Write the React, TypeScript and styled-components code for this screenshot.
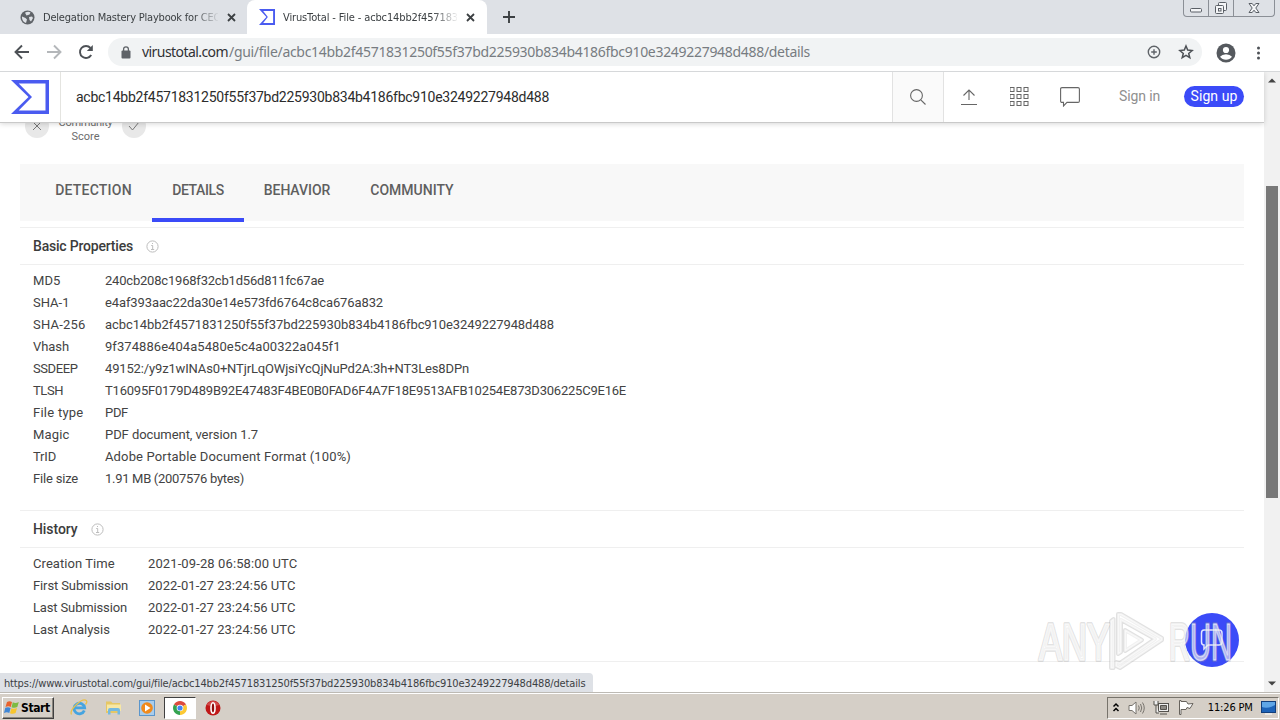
import React from "react";
import styled, { createGlobalStyle } from "styled-components";

const HASH = "acbc14bb2f4571831250f55f37bd225930b834b4186fbc910e3249227948d488";
const BLUE = "#3b4bf8";
const UI = '"DejaVu Sans Condensed", "Noto Sans", sans-serif';
const BODY = 'Roboto, "Liberation Sans", sans-serif';

const GlobalStyle = createGlobalStyle`
  * { box-sizing: border-box; }
  body { margin: 0; overflow: hidden; background: #fff; }
  svg { display: block; flex: none; }
`;

const Screen = styled.div`
  width: 1280px;
  height: 720px;
  display: flex;
  flex-direction: column;
  position: relative;
  overflow: hidden;
  font-family: ${BODY};
  color: #434343;
`;

/* letter-spaced text run that never wraps */
const Text = styled.span<{ $ls?: number }>`
  white-space: nowrap;
  letter-spacing: ${(p) => p.$ls ?? 0}px;
`;

/* ---------- browser chrome ---------- */

const TabStrip = styled.div`
  flex: none;
  height: 34px;
  display: flex;
  background: #dee1e6;
  font-family: ${UI};
  font-size: 11px;
  color: #3c4043;
`;

const BrowserTab = styled.div<{ $active?: boolean }>`
  width: ${(p) => (p.$active ? 240 : 247)}px;
  height: 34px;
  padding: 0 ${(p) => (p.$active ? 12 : 11)}px 0 ${(p) => (p.$active ? 12 : 20)}px;
  display: flex;
  align-items: center;
  border-radius: ${(p) => (p.$active ? "8px 8px 0 0" : "0")};
  background: ${(p) => (p.$active ? "#fff" : "transparent")};
`;

const TabTitle = styled.div`
  flex: 1;
  margin: 1px 9px 0 8px;
  overflow: hidden;
  white-space: nowrap;
  mask-image: linear-gradient(to right, #000 86%, transparent 101%);
`;

const NewTab = styled.div`
  width: 44px;
  height: 34px;
  display: grid;
  place-items: center;
`;

const WindowButtons = styled.div`
  margin: 0 5px 0 auto;
  height: 17px;
  display: flex;
  border: 1px solid #8b8f96;
  border-top: 0;
  border-radius: 0 0 4px 4px;
`;

const WindowButton = styled.div<{ $w: number }>`
  width: ${(p) => p.$w}px;
  display: flex;
  justify-content: center;
  & + & { border-left: 1px solid #8b8f96; }
`;

const Toolbar = styled.div`
  flex: none;
  height: 38px;
  padding: 0 14px;
  display: flex;
  align-items: center;
  border-bottom: 1px solid #d6d8da;
  background: #fff;
`;

const NavIcon = styled.div`
  width: 32px;
  padding-bottom: 1px;
`;

const AddressBar = styled.div`
  width: 1094px;
  height: 28px;
  margin: 0 14px 1px -2px;
  padding: 0 8px 0 13px;
  display: flex;
  align-items: center;
  border-radius: 14px;
  background: #f1f3f4;
`;

const Address = styled.div`
  flex: 1;
  margin-left: 11px;
  display: flex;
  font-family: "Noto Sans", sans-serif;
  font-size: 14px;
  line-height: 26px;
  color: #777c81;
`;

const Host = styled(Text)`
  width: 87px;
  color: #303134;
`;

const AddressActions = styled.div`
  display: flex;
  gap: 16px;
`;

const MenuDots = styled.svg`
  margin-left: 20px;
`;

/* ---------- page ---------- */

const Viewport = styled.div`
  flex: none;
  height: 620px;
  display: flex;
  overflow: hidden;
`;

const Page = styled.div`
  width: 1264px;
  display: flex;
  flex-direction: column;
  background: #fff;
`;

const SiteHeader = styled.header`
  position: relative;
  z-index: 1;
  flex: none;
  height: 51px;
  display: flex;
  background: #fff;
  border-bottom: 1px solid #c9c9c9;
  box-shadow: 0 1px 5px rgba(0, 0, 0, 0.16);
`;

const LogoCell = styled.div`
  width: 61px;
  padding: 8px 0 0 11px;
  border-right: 1px solid #e4e4e0;
`;

const SearchText = styled.div`
  flex: 1;
  padding-left: 15px;
  font-size: 14px;
  line-height: 51px;
  color: #2c2c2c;
`;

const SearchButton = styled.div`
  width: 52px;
  display: grid;
  place-items: center;
  border: solid #e2e2e2;
  border-width: 0 1px;
  background: #fafafa;
`;

const HeaderIcons = styled.div`
  width: 320px;
  padding-left: 16px;
  display: flex;
  align-items: center;
  font-size: 14px;
`;

const HeaderIcon = styled.div`
  width: 50px;
`;

const SignIn = styled(Text)`
  width: 65px;
  margin: 0 0 3px 9px;
  color: #8f8f8f;
`;

const SignUp = styled(Text)`
  width: 60px;
  height: 21px;
  margin-bottom: 2px;
  border-radius: 11px;
  background: ${BLUE};
  color: #fff;
  line-height: 21px;
  text-align: center;
`;

const Content = styled.main`
  padding: 0 20px;
  height: 569px;
  overflow: hidden;
`;

const ScoreRow = styled.div`
  height: 41px;
  padding: 0 5px;
  display: flex;
  align-items: flex-start;
  font-size: 11px;
  line-height: 14px;
  color: #6c6c6c;
`;

const Vote = styled.div`
  width: 24px;
  height: 24px;
  margin-top: -9px;
  border-radius: 50%;
  background: #e8e8e8;
  display: grid;
  place-items: center;
`;

const ScoreLabel = styled.div`
  width: 73px;
  margin-top: -7px;
  text-align: center;
`;

const PageTabs = styled.nav`
  height: 57px;
  margin-bottom: 6px;
  padding-left: 15px;
  display: flex;
  background: #f8f8f8;
  font-size: 14px;
  font-weight: 500;
  color: #5f5f5f;
`;

const PageTab = styled.div<{ $w: number; $active?: boolean }>`
  width: ${(p) => p.$w}px;
  height: 58px;
  text-align: center;
  line-height: 52px;
  border-bottom: 4px solid ${(p) => (p.$active ? BLUE : "transparent")};
`;

const Section = styled.section<{ $h: number }>`
  height: ${(p) => p.$h}px;
  border-top: 1px solid #efefef;
`;

const SectionTitle = styled.div`
  height: 37px;
  padding-left: 13px;
  display: flex;
  align-items: center;
  gap: 13px;
  border-bottom: 1px solid #efefef;
  font-size: 14px;
  font-weight: 500;
  color: #3c3c3c;
`;

const Rows = styled.div<{ $label: number }>`
  padding: 4px 0 0 13px;
  display: grid;
  grid-template-columns: ${(p) => p.$label}px 1fr;
  grid-auto-rows: 22px;
  align-items: center;
  font-size: 13px;
`;

const ScrollBar = styled.div`
  width: 16px;
  padding: 6px 0;
  display: flex;
  flex-direction: column;
  align-items: center;
  background: #f1f1f1;
`;

const Thumb = styled.div`
  width: 12px;
  height: 312px;
  margin: 103px 0 auto;
  background: #787878;
`;

const StatusBubble = styled.div`
  position: absolute;
  left: 0;
  top: 673px;
  width: 593px;
  height: 19px;
  padding-left: 4px;
  border-radius: 0 4px 0 0;
  background: #dee1e6;
  font-family: ${UI};
  font-size: 11px;
  line-height: 21px;
  color: #3c4043;
`;

const ChatButton = styled.div`
  position: absolute;
  left: 1185px;
  top: 613px;
  width: 54px;
  height: 54px;
  border-radius: 50%;
  background: ${BLUE};
  display: grid;
  place-items: center;
`;

const Watermark = styled.svg`
  position: absolute;
  left: 1030px;
  top: 602px;
`;

/* ---------- taskbar ---------- */

const Taskbar = styled.div`
  flex: none;
  height: 28px;
  padding: 2px 1px 0 2px;
  display: flex;
  align-items: center;
  background: #d5cfc7;
  border-top: 1px solid #bdbab4;
  box-shadow: inset 0 1px #fff;
  font-family: ${UI};
  font-size: 11px;
  color: #000;
`;

const StartButton = styled.div`
  width: 52px;
  height: 22px;
  padding-left: 1px;
  display: flex;
  align-items: center;
  gap: 1px;
  border: 1px solid;
  border-color: #fff #404040 #404040 #fff;
  box-shadow: inset -1px -1px #8a867e;
  font-size: 12px;
  font-weight: bold;
`;

const QuickLaunch = styled.div`
  margin-left: 8px;
  display: flex;
  align-items: center;
`;

const TaskItem = styled.div<{ $active?: boolean }>`
  width: ${(p) => (p.$active ? 32 : 34)}px;
  height: 22px;
  display: grid;
  place-items: center;
  border: 1px solid;
  border-color: ${(p) => (p.$active ? "#404040 #fff #fff #404040" : "transparent")};
  background: ${(p) => (p.$active ? "#fff" : "transparent")};
`;

const Tray = styled.div`
  width: 172px;
  height: 22px;
  margin-left: auto;
  padding: 0 2px 0 4px;
  display: flex;
  align-items: center;
  justify-content: space-between;
  border: 1px solid;
  border-color: #77736b #fff #fff #77736b;
`;

const Clock = styled(Text)`
  margin-left: 6px;
`;

/* ---------- drawings ---------- */

const Sigma = ({ w, h, notch = 3.5 }: { w: number; h: number; notch?: number }) => (
  <svg width={w} height={h} viewBox="0 0 38 34" preserveAspectRatio="none">
    <path
      fill="#4a5bf0"
      fillRule="evenodd"
      d={`M0 0H38V34H0L17.5 17ZM${notch * 2.2} ${notch}L21 17L${notch * 2.2} ${34 - notch}H${38 - notch}V${notch}Z`}
    />
  </svg>
);

const Close = () => (
  <svg width="9" height="9" viewBox="0 0 9 9" stroke="#3c4043" strokeWidth="1.8">
    <path d="M1 1l7 7M8 1l-7 7" />
  </svg>
);

const Globe = () => (
  <svg width="15" height="15" viewBox="0 0 15 15">
    <circle cx="7.5" cy="7.5" r="7" fill="#5f6368" />
    <path fill="#dee1e6" d="M2 6.500L5.500 8 7 9.500 6 13Q2.500 12 2 8ZM5 2.800Q8 1 10.500 2.400L9.500 4.500 6.500 5.500ZM9 7l3-.5 1 1.500-2 3.500-1.500-1.500z" />
  </svg>
);

const Arrow = ({ color, flip }: { color: string; flip?: boolean }) => (
  <svg width="16" height="16" viewBox="0 0 16 16" fill="none" stroke={color} strokeWidth="1.9">
    <path d={flip ? "M1 8H14M8 1.500L14.500 8 8 14.500" : "M15 8H2M8 1.500L1.500 8 8 14.500"} />
  </svg>
);

const Reload = () => (
  <svg width="16" height="16" viewBox="0 0 16 16">
    <path d="M13.200 11A6 6 0 1 1 12.500 4" fill="none" stroke="#4d5156" strokeWidth="1.9" />
    <path d="M14.800 1V7H8.800Z" fill="#4d5156" />
  </svg>
);

const Lock = () => (
  <svg width="10" height="13" viewBox="0 0 10 13">
    <rect x="0.5" y="4.5" width="9" height="8" rx="1" fill="#5f6368" />
    <path d="M2.600 5V3.200a2.400 2.400 0 0 1 4.800 0V5" fill="none" stroke="#5f6368" strokeWidth="1.3" />
  </svg>
);

const ZoomPlus = () => (
  <svg width="16" height="16" viewBox="0 0 16 16" fill="none" stroke="#5f6368" strokeWidth="1.4">
    <circle cx="8" cy="8" r="5.7" />
    <path d="M8 5.200v5.600M5.200 8h5.600" />
  </svg>
);

const Star = () => (
  <svg width="16" height="16" viewBox="0 0 16 16" fill="none" stroke="#4d5156" strokeWidth="1.5">
    <path d="M8 2l1.700 4.100 4.400.4-3.400 2.900 1.100 4.300L8 11.400l-3.800 2.300 1.100-4.300L1.900 6.500l4.400-.4z" />
  </svg>
);

const Avatar = () => (
  <svg width="20" height="20" viewBox="0 0 20 20">
    <circle cx="10" cy="10" r="9.5" fill="#55595e" />
    <circle cx="10" cy="7" r="3.1" fill="#fff" />
    <path d="M4 13.800Q6 11.300 10 11.300T16 13.800Q13.800 16.800 10 16.800T4 13.800Z" fill="#fff" />
  </svg>
);

const Info = () => (
  <svg width="13" height="13" viewBox="0 0 13 13" fill="none" stroke="#bdbdbd">
    <circle cx="6.5" cy="6.5" r="5.6" />
    <path d="M5.200 5.500H6.700V9.500M5 9.500H8.200M6 3.500H7" />
  </svg>
);

const Caret = ({ down }: { down?: boolean }) => (
  <svg width="8" height="5" viewBox="0 0 8 5">
    <path d={down ? "M0 .5H8L4 4.500Z" : "M0 4.500H8L4 .5Z"} fill="#444" />
  </svg>
);

type RowData = { label: string; value: string; a: number; b: number };

const Row = ({ label, value, a, b }: RowData) => (
  <>
    <Text $ls={a}>{label}</Text>
    <Text $ls={b}>{value}</Text>
  </>
);

const basic: RowData[] = [
  { label: "MD5", value: "240cb208c1968f32cb1d56d811fc67ae", a: 0.1, b: -0.202 },
  { label: "SHA-1", value: "e4af393aac22da30e14e573fd6764c8ca676a832", a: 0, b: -0.11 },
  { label: "SHA-256", value: HASH, a: 0.2, b: -0.083 },
  { label: "Vhash", value: "9f374886e404a5480e5c4a00322a045f1", a: -0.076, b: 0.061 },
  { label: "SSDEEP", value: "49152:/y9z1wINAs0+NTjrLqOWjsiYcQjNuPd2A:3h+NT3Les8DPn", a: -0.408, b: -0.15 },
  { label: "TLSH", value: "T16095F0179D489B92E47483F4BE0B0FAD6F4A7F18E9513AFB10254E873D306225C9E16E", a: -0.438, b: -0.218 },
  { label: "File type", value: "PDF", a: 0.253, b: -0.306 },
  { label: "Magic", value: "PDF document, version 1.7", a: 0.163, b: -0.064 },
  { label: "TrID", value: "Adobe Portable Document Format (100%)", a: -0.188, b: 0.138 },
  { label: "File size", value: "1.91 MB (2007576 bytes)", a: -0.193, b: -0.297 },
];

const history: RowData[] = [
  { label: "Creation Time", value: "2021-09-28 06:58:00 UTC", a: 0.065, b: 0.11 },
  { label: "First Submission", value: "2022-01-27 23:24:56 UTC", a: -0.116, b: 0.03 },
  { label: "Last Submission", value: "2022-01-27 23:24:56 UTC", a: -0.145, b: 0.03 },
  { label: "Last Analysis", value: "2022-01-27 23:24:56 UTC", a: 0, b: 0.03 },
];

export default function App() {
  return (
    <Screen>
      <GlobalStyle />
      <TabStrip>
        <BrowserTab>
          <Globe />
          <TabTitle><Text $ls={-0.211}>Delegation Mastery Playbook for CEO</Text></TabTitle>
          <Close />
        </BrowserTab>
        <BrowserTab $active>
          <Sigma w={16} h={16} notch={4.5} />
          <TabTitle><Text $ls={-0.134}>VirusTotal - File - {HASH.slice(0, 16)}</Text></TabTitle>
          <Close />
        </BrowserTab>
        <NewTab>
          <svg width="12" height="12" viewBox="0 0 12 12" stroke="#3c4043" strokeWidth="1.9"><path d="M6 0v12M0 6h12" /></svg>
        </NewTab>
        <WindowButtons>
          <WindowButton $w={24}>
            <svg width="14" height="16" fill="#f4f5f7" stroke="#5a5f66"><rect x="1.5" y="8.5" width="11" height="3.5" rx="1" /></svg>
          </WindowButton>
          <WindowButton $w={25}>
            <svg width="14" height="16" fill="#f4f5f7" stroke="#5a5f66"><rect x="4.5" y="2.5" width="8" height="8" rx="1" /><rect x="1.5" y="5.5" width="8" height="8" rx="1" /><rect x="4.5" y="8.5" width="2.5" height="2.5" /></svg>
          </WindowButton>
          <WindowButton $w={41}>
            <svg width="14" height="16" fill="#f4f5f7" stroke="#5a5f66"><path d="M2 3.500H5.200L7 5.800 8.800 3.500H12L8.800 8 12 12.500H8.800L7 10.200 5.200 12.500H2L5.200 8Z" /></svg>
          </WindowButton>
        </WindowButtons>
      </TabStrip>
      <Toolbar>
        <NavIcon><Arrow color="#4d5156" /></NavIcon>
        <NavIcon><Arrow color="#b4b7ba" flip /></NavIcon>
        <NavIcon><Reload /></NavIcon>
        <AddressBar>
          <Lock />
          <Address>
            <Host $ls={-0.567}>virustotal.com</Host>
            <Text $ls={-0.305}>/gui/file/{HASH}/details</Text>
          </Address>
          <AddressActions><ZoomPlus /><Star /></AddressActions>
        </AddressBar>
        <Avatar />
        <MenuDots width="5" height="16" viewBox="0 0 5 16" fill="#4d5156">
          <circle cx="2.5" cy="3" r="1.5" /><circle cx="2.5" cy="8" r="1.5" /><circle cx="2.5" cy="13" r="1.5" />
        </MenuDots>
      </Toolbar>
      <Viewport>
        <Page>
          <SiteHeader>
            <LogoCell><Sigma w={38} h={34} /></LogoCell>
            <SearchText><Text $ls={-0.254}>{HASH}</Text></SearchText>
            <SearchButton>
              <svg width="16" height="16" viewBox="0 0 16 16" fill="none" stroke="#666" strokeWidth="1.1"><circle cx="6.5" cy="6.5" r="5.9" /><path d="M10.800 10.800L15.500 15.500" /></svg>
            </SearchButton>
            <HeaderIcons>
              <HeaderIcon>
                <svg width="18" height="18" viewBox="0 0 18 18" fill="none" stroke="#666" strokeWidth="1.1"><path d="M1 16.500H17M9 12V2M3.500 7.500L9 2 14.500 7.500" /></svg>
              </HeaderIcon>
              <HeaderIcon>
                <svg width="19" height="20" viewBox="1 0 19 20" fill="none" stroke="#666">
                  {[0.5, 7.5, 14.5].map((y) => [1.5, 8.5, 15.5].map((x) => <rect key={`${x}-${y}`} x={x - 0.5} y={y} width="4" height="4" />))}
                </svg>
              </HeaderIcon>
              <HeaderIcon>
                <svg width="20" height="20" viewBox="1 0 20 20" fill="none" stroke="#666" strokeWidth="1.1"><path d="M2 .6H18Q19.400 .6 19.400 2V14Q19.400 15.400 18 15.400H7L3.500 19V15.400H2Q.6 15.400 .6 14V2Q.6 .6 2 .6Z" transform="translate(1 0)" /></svg>
              </HeaderIcon>
              <SignIn $ls={-0.131}>Sign in</SignIn>
              <SignUp $ls={0.091}>Sign up</SignUp>
            </HeaderIcons>
          </SiteHeader>
          <Content>
            <ScoreRow>
              <Vote><svg width="10" height="10" stroke="#777"><path d="M1 1l8 8M9 1L1 9" /></svg></Vote>
              <ScoreLabel><Text $ls={-0.26}>Community</Text><br />Score</ScoreLabel>
              <Vote><svg width="12" height="10" fill="none" stroke="#777"><path d="M1 5l3.500 4L11 1" /></svg></Vote>
            </ScoreRow>
            <PageTabs>
              <PageTab $w={117}><Text $ls={0.23}>DETECTION</Text></PageTab>
              <PageTab $w={92} $active><Text $ls={-0.39}>DETAILS</Text></PageTab>
              <PageTab $w={106}><Text $ls={-0.07}>BEHAVIOR</Text></PageTab>
              <PageTab $w={124}><Text>COMMUNITY</Text></PageTab>
            </PageTabs>
            <Section $h={283}>
              <SectionTitle><Text $ls={-0.2}>Basic Properties</Text><Info /></SectionTitle>
              <Rows $label={72}>{basic.map((r) => <Row key={r.label} {...r} />)}</Rows>
            </Section>
            <Section $h={151}>
              <SectionTitle><Text $ls={-0.07}>History</Text><Info /></SectionTitle>
              <Rows $label={115}>{history.map((r) => <Row key={r.label} {...r} />)}</Rows>
            </Section>
            <Section $h={40} />
          </Content>
        </Page>
        <ScrollBar><Caret /><Thumb /><Caret down /></ScrollBar>
      </Viewport>
      <Taskbar>
        <StartButton>
          <svg width="16" height="15" viewBox="0 0 16 15">
            <path d="M3 2Q5.500 .5 8 2L6.800 7Q4.500 5.500 1.500 7Z" fill="#e8622c" />
            <path d="M8.800 2.300Q11.500 3.600 14.800 2L13.300 7Q10.500 8.500 7.500 7.200Z" fill="#7dbb42" />
            <path d="M1.300 7.800Q4 6.500 6.600 7.900L5.300 13Q3 11.500 0 13Z" fill="#3f86d6" />
            <path d="M7.400 8.200Q10.200 9.400 13 8L11.600 13Q9 14.500 6 13.200Z" fill="#f7c52d" />
          </svg>
          <Text $ls={-0.4}>Start</Text>
        </StartButton>
        <QuickLaunch>
          <TaskItem>
            <svg width="18" height="17" viewBox="0 0 18 17" fill="none">
              <path d="M14.300 11.500A5.300 5.300 0 1 1 14.600 8.800H5" stroke="#45a4e0" strokeWidth="2.8" />
              <path d="M1.500 15.500Q-.5 12 6.500 5.500T16.500 1.800Q17.500 3 15.500 5.500" stroke="#e9c04a" strokeWidth="1.3" />
            </svg>
          </TaskItem>
          <TaskItem>
            <svg width="17" height="17" viewBox="0 0 17 17">
              <path d="M1 2.500H6L7.500 4H15V14H1Z" fill="#e6c765" />
              <path d="M2 5.500H16V12H2Z" fill="#f7e7a4" />
              <path d="M3 15.500V11Q3 9 5 9H13Q15 9 15 11V15.500H12.500V12H5.500V15.500Z" fill="#74b9e0" />
            </svg>
          </TaskItem>
          <TaskItem>
            <svg width="16" height="16" viewBox="0 0 16 16">
              <rect x=".5" y=".5" width="15" height="15" fill="#a9cdec" stroke="#5b96cc" />
              <circle cx="8" cy="8" r="5.8" fill="#f08a1c" />
              <path d="M6 4.500L11.500 8 6 11.500Z" fill="#fff" />
            </svg>
          </TaskItem>
          <TaskItem $active>
            <svg width="14" height="14" viewBox="0 0 14 14">
              <path d="M7 7L.94 3.500A7 7 0 0 1 13.060 3.500Z" fill="#dd4b3e" />
              <path d="M7 7L13.060 3.500A7 7 0 0 1 7 14Z" fill="#fcc934" />
              <path d="M7 7L7 14A7 7 0 0 1 .94 3.500Z" fill="#34a350" />
              <circle cx="7" cy="7" r="3.3" fill="#fff" />
              <circle cx="7" cy="7" r="2.6" fill="#4285f4" />
            </svg>
          </TaskItem>
          <TaskItem>
            <svg width="16" height="16" viewBox="0 0 16 16">
              <circle cx="8" cy="8" r="7.5" fill="#c01818" />
              <path d="M1.500 5Q8-3 14.500 5 8 7 1.500 5Z" fill="#e06a6a" opacity=".6" />
              <ellipse cx="8" cy="8" rx="2" ry="5.2" fill="#8e0c0c" stroke="#fff" strokeWidth="1.6" />
            </svg>
          </TaskItem>
        </QuickLaunch>
        <Tray>
          <svg width="8" height="12" viewBox="0 0 8 12" fill="none" stroke="#000" strokeWidth="1.5"><path d="M1.500 4.500L4 2 6.500 4.500M1.500 9L4 6.500 6.500 9" /></svg>
          <svg width="17" height="14" viewBox="0 0 17 14" fill="#fff" stroke="#77736d"><path d="M1 4.500H4L8 1V13L4 9.500H1Z" /><path fill="none" d="M10.500 4.500Q12 7 10.500 9.500M12.500 3Q15 7 12.500 11M14.500 1.500Q18 7 14.500 12.500" /></svg>
          <svg width="16" height="15" viewBox="0 0 16 15" fill="#eee" stroke="#55524d"><rect x="5.5" y="3.5" width="10" height="8" /><path fill="#8d8a84" d="M7.500 5.500H13.500V9.500H7.500Z" /><path d="M7 14H14M1 1V5H5V1M3 5V13H6" /></svg>
          <svg width="16" height="15" viewBox="0 0 16 15" fill="#fff" stroke="#66625c"><path d="M1.500 .5V14.500H3V9.500H8L9 7.500 12 8.500 15 3.500 10 4 8.500 1.500H3V.5Z" /></svg>
          <Clock $ls={-0.146}>11:26 PM</Clock>
          <svg width="15" height="14" viewBox="0 0 15 14"><rect x=".5" y=".5" width="14" height="11" fill="#1d63b8" stroke="#123f7c" /><path d="M1 1H14V4Q7 8 1 6Z" fill="#5fa6e6" /><path d="M4 13H11" stroke="#fff" /></svg>
        </Tray>
      </Taskbar>
      <StatusBubble><Text $ls={-0.155}>https://www.virustotal.com/gui/file/{HASH}/details</Text></StatusBubble>
      <ChatButton>
        <svg width="24" height="22" viewBox="0 0 24 22" fill="none" stroke="#e3e6ff" strokeWidth="1.5"><path d="M4 1H19Q22 1 22 4V13Q22 16 19 16H8L4 20V16Q1.500 16 1.500 13V4Q1.500 1 4 1Z" /></svg>
      </ChatButton>
      <Watermark width="215" height="76" viewBox="0 0 215 76">
        <g fontFamily='"Liberation Sans Narrow", "Liberation Sans", sans-serif' fontSize="51" strokeLinejoin="round">
          {[
            { stroke: "#9a9a9a", strokeOpacity: 0.3, strokeWidth: 4, fill: "none" },
            { stroke: "#fff", strokeOpacity: 0.6, strokeWidth: 1.6, fill: "#fff", fillOpacity: 0.55 },
          ].map((layer, i) => (
            <g key={i} {...layer}>
              <text x="9" y="58" textLength="71" lengthAdjust="spacingAndGlyphs">ANY</text>
              <text x="139" y="58" textLength="63" lengthAdjust="spacingAndGlyphs">RUN</text>
              <path fillRule="evenodd" d="M81 66V19L83.500 17V66ZM88 12L91 12 132 36V38L90 66 86 64V60L90 61 125 37 91 18V50L88 52ZM95 28L112 38 95 49Z" />
            </g>
          ))}
        </g>
      </Watermark>
    </Screen>
  );
}
